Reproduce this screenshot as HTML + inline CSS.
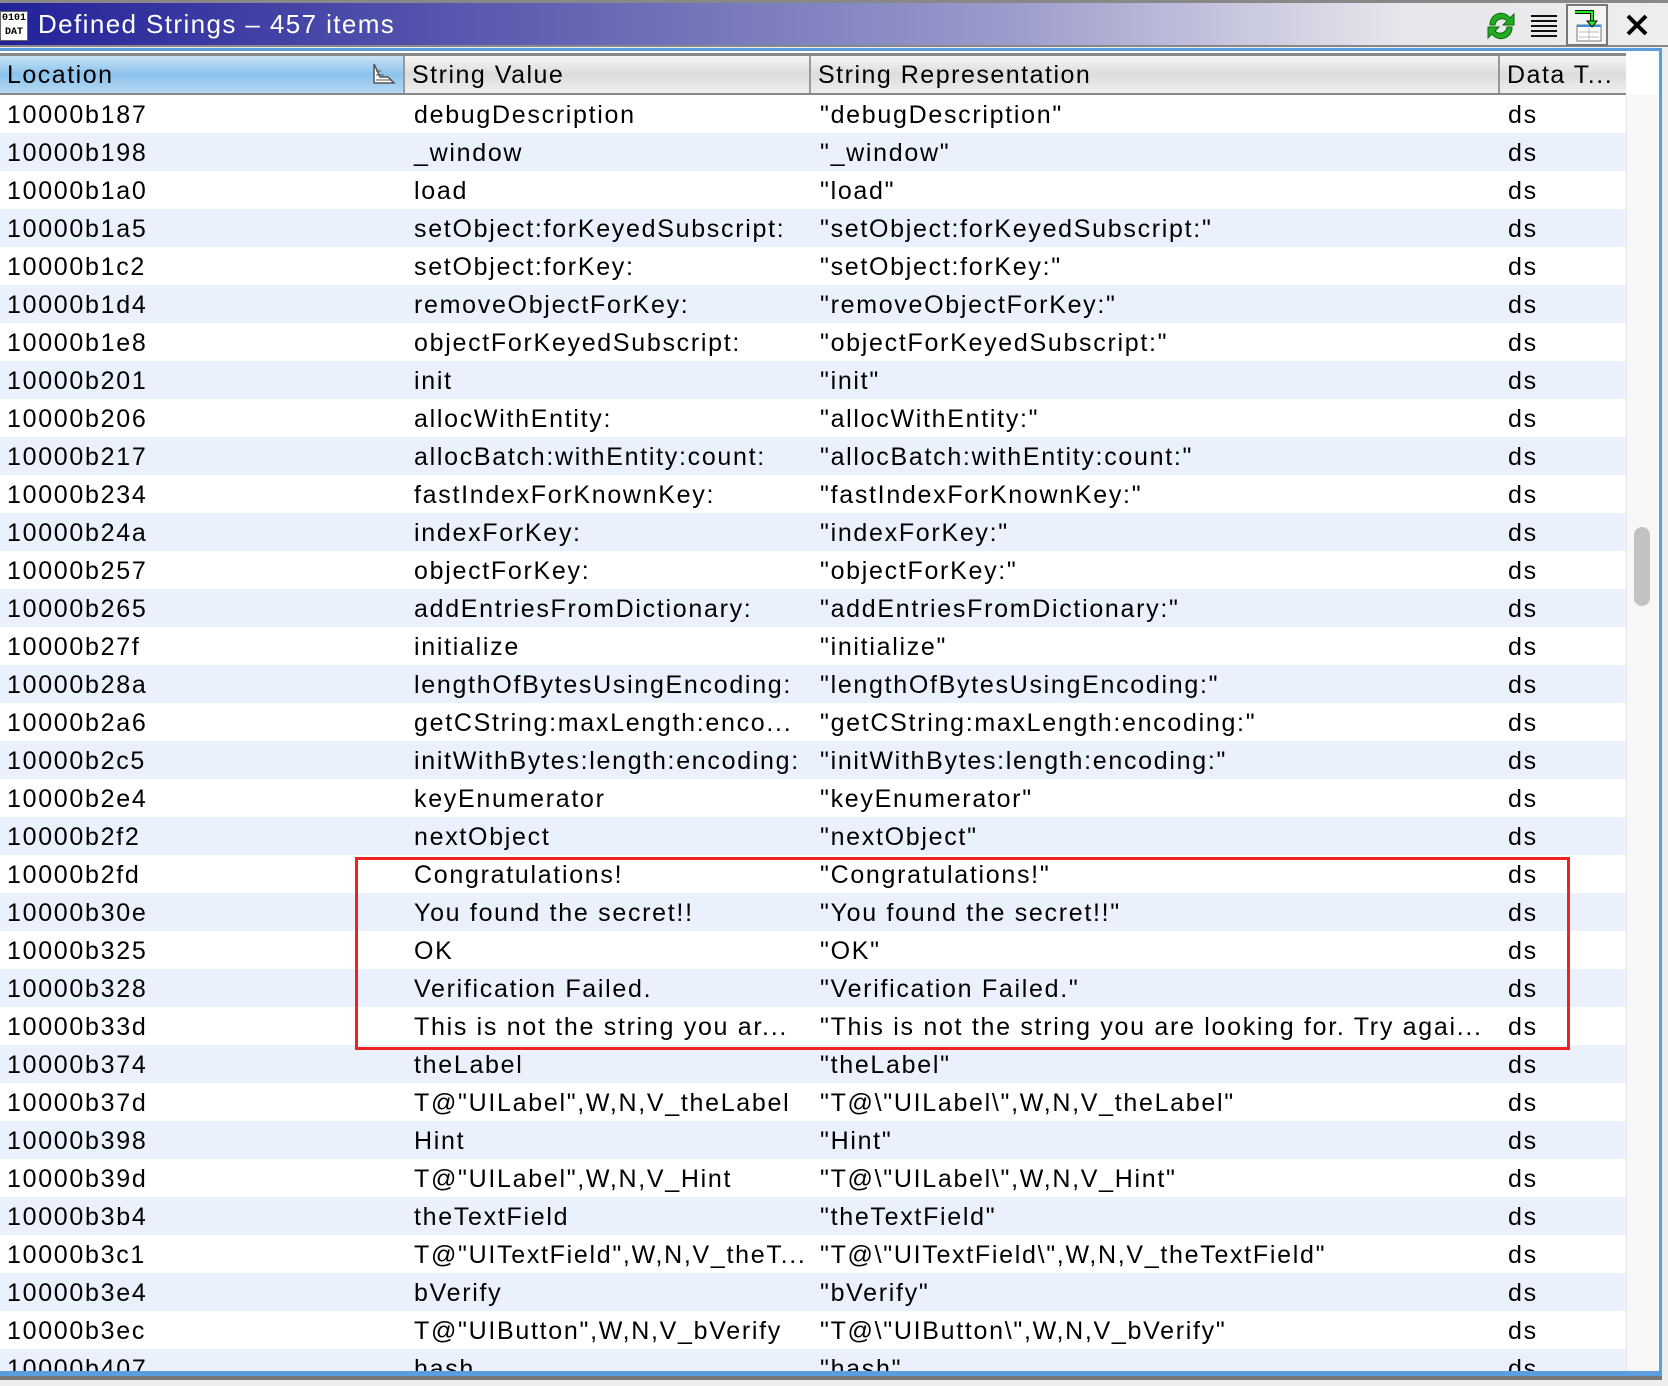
<!DOCTYPE html>
<html><head><meta charset="utf-8"><style>
*{margin:0;padding:0;box-sizing:border-box}
body{width:1668px;height:1386px;background:#eeeeee;position:relative;overflow:hidden;font-family:"Liberation Sans","DejaVu Sans",sans-serif;color:#000}
.title{position:absolute;left:0;top:0;width:1668px;height:47px;border-top:3px solid #888;background:linear-gradient(90deg,#22229a 0%,#5c5cb0 30%,#9a9acb 60%,#e6e6ec 84%,#eeeeee 100%);border-bottom:2px solid #888}
.title .t{position:absolute;left:38px;top:6px;font-size:26px;color:#fff;letter-spacing:1.4px}
.ico{position:absolute;left:0;top:8px;width:28px;height:30px;background:#fff;font:bold 10px "Liberation Mono",monospace;line-height:14px;color:#000;text-align:center;border:1px solid #666}
.blue{position:absolute;left:0;top:48px;width:1662px;height:3px;background:#5a9ee0}
.frame{position:absolute;left:0;top:51px;width:1662px;height:1326px;border-right:3px solid #5a9ee0;background:#fff}
.hdr{position:absolute;left:0;top:53px;height:42px;width:1626px;border-top:3px solid #888;border-bottom:2px solid #888;background:linear-gradient(#f6f6f6,#dcdcdc 50%,#eeeeee)}
.hc{position:absolute;top:0;height:37px;font-size:25px;line-height:38px;padding-left:7px;border-right:2px solid #999;letter-spacing:1.5px}
.row{position:absolute;left:0;width:1626px;height:38px;font-size:25px;line-height:40px;letter-spacing:1.7px}
.row.o{background:#eaf0fc}
.row span{position:absolute;top:0;white-space:nowrap}
.c1{left:7px}.c2{left:414px}.c3{left:820px}.c4{left:1508px}
.track{position:absolute;left:1626px;top:95px;width:32px;height:1276px;background:#f7f7f7;border-left:1px solid #e6e6e6}
.thumb{position:absolute;left:1634px;top:527px;width:16px;height:79px;border-radius:8px;background:#c2c2c2}
.red{position:absolute;left:355px;top:857px;width:1215px;height:193px;border:3px solid #ee2222}
.bot1{position:absolute;left:0;top:1371px;width:1662px;height:5px;background:#5a9ee0}
.bot2{position:absolute;left:0;top:1376px;width:1662px;height:4px;background:#777}
</style></head><body>
<div class="title"><div class="ico">0101<br>DAT</div><div class="t">Defined Strings – 457 items</div>
<svg style="position:absolute;left:1484px;top:6px" width="34" height="34" viewBox="0 0 34 34"><path d="M6 16 A11 11 0 0 1 26 9 L30 5 L30 16 L19 16 L23 12 A7 7 0 0 0 11 16 Z" fill="#22aa22" stroke="#0a6a0a" stroke-width="1"/><path d="M28 18 A11 11 0 0 1 8 25 L4 29 L4 18 L15 18 L11 22 A7 7 0 0 0 23 18 Z" fill="#22aa22" stroke="#0a6a0a" stroke-width="1"/></svg>
<svg style="position:absolute;left:1531px;top:11px" width="26" height="24"><g fill="#111"><rect y="1" width="26" height="2"/><rect y="6" width="26" height="2"/><rect y="11" width="26" height="2"/><rect y="16" width="26" height="2"/><rect y="21" width="26" height="2"/></g></svg>
<div style="position:absolute;left:1566px;top:1px;width:42px;height:42px;border:2px solid #777;background:#f4f4f4"></div>
<svg style="position:absolute;left:1572px;top:6px" width="32" height="34"><rect x="5" y="16" width="24" height="16" fill="#fff" stroke="#777"/><line x1="5" y1="17" x2="29" y2="17" stroke="#3a8ee0" stroke-width="2"/><g stroke="#bbb"><line x1="7" y1="23" x2="27" y2="23"/><line x1="7" y1="28" x2="27" y2="28"/><line x1="17" y1="19" x2="17" y2="31"/></g><path d="M3 3 H20 V14" fill="none" stroke="#111" stroke-width="4"/><path d="M3 3 H20 V14" fill="none" stroke="#22ee22" stroke-width="2"/><path d="M15 12 L20 18 L25 12 Z" fill="#22ee22" stroke="#111"/></svg>
<svg style="position:absolute;left:1625px;top:10px" width="24" height="24"><path d="M3 3 L21 21 M21 3 L3 21" stroke="#000" stroke-width="4"/></svg>
</div>
<div class="blue"></div>
<div class="frame"></div>
<div class="hdr">
<div class="hc" style="left:0;width:405px;background:linear-gradient(#c8e2f6,#8cc2ec 50%,#b6d8f3)">Location
<svg style="position:absolute;left:372px;top:6px" width="24" height="24"><path d="M2 2 V21 H22 L16 15 H8 L3 4 Z" fill="#fff" stroke="#555" stroke-width="1.5"/><g stroke="#555"><line x1="4" y1="9" x2="9" y2="9"/><line x1="4" y1="13" x2="12" y2="13"/><line x1="4" y1="18" x2="20" y2="18"/></g></svg></div>
<div class="hc" style="left:405px;width:406px">String Value</div>
<div class="hc" style="left:811px;width:689px">String Representation</div>
<div class="hc" style="left:1500px;width:126px;border-right:none">Data T...</div>
</div>
<div class="track"></div><div class="thumb"></div>
<div class="row" style="top:95px"><span class="c1">10000b187</span><span class="c2">debugDescription</span><span class="c3">"debugDescription"</span><span class="c4">ds</span></div>
<div class="row o" style="top:133px"><span class="c1">10000b198</span><span class="c2">_window</span><span class="c3">"_window"</span><span class="c4">ds</span></div>
<div class="row" style="top:171px"><span class="c1">10000b1a0</span><span class="c2">load</span><span class="c3">"load"</span><span class="c4">ds</span></div>
<div class="row o" style="top:209px"><span class="c1">10000b1a5</span><span class="c2">setObject:forKeyedSubscript:</span><span class="c3">"setObject:forKeyedSubscript:"</span><span class="c4">ds</span></div>
<div class="row" style="top:247px"><span class="c1">10000b1c2</span><span class="c2">setObject:forKey:</span><span class="c3">"setObject:forKey:"</span><span class="c4">ds</span></div>
<div class="row o" style="top:285px"><span class="c1">10000b1d4</span><span class="c2">removeObjectForKey:</span><span class="c3">"removeObjectForKey:"</span><span class="c4">ds</span></div>
<div class="row" style="top:323px"><span class="c1">10000b1e8</span><span class="c2">objectForKeyedSubscript:</span><span class="c3">"objectForKeyedSubscript:"</span><span class="c4">ds</span></div>
<div class="row o" style="top:361px"><span class="c1">10000b201</span><span class="c2">init</span><span class="c3">"init"</span><span class="c4">ds</span></div>
<div class="row" style="top:399px"><span class="c1">10000b206</span><span class="c2">allocWithEntity:</span><span class="c3">"allocWithEntity:"</span><span class="c4">ds</span></div>
<div class="row o" style="top:437px"><span class="c1">10000b217</span><span class="c2">allocBatch:withEntity:count:</span><span class="c3">"allocBatch:withEntity:count:"</span><span class="c4">ds</span></div>
<div class="row" style="top:475px"><span class="c1">10000b234</span><span class="c2">fastIndexForKnownKey:</span><span class="c3">"fastIndexForKnownKey:"</span><span class="c4">ds</span></div>
<div class="row o" style="top:513px"><span class="c1">10000b24a</span><span class="c2">indexForKey:</span><span class="c3">"indexForKey:"</span><span class="c4">ds</span></div>
<div class="row" style="top:551px"><span class="c1">10000b257</span><span class="c2">objectForKey:</span><span class="c3">"objectForKey:"</span><span class="c4">ds</span></div>
<div class="row o" style="top:589px"><span class="c1">10000b265</span><span class="c2">addEntriesFromDictionary:</span><span class="c3">"addEntriesFromDictionary:"</span><span class="c4">ds</span></div>
<div class="row" style="top:627px"><span class="c1">10000b27f</span><span class="c2">initialize</span><span class="c3">"initialize"</span><span class="c4">ds</span></div>
<div class="row o" style="top:665px"><span class="c1">10000b28a</span><span class="c2">lengthOfBytesUsingEncoding:</span><span class="c3">"lengthOfBytesUsingEncoding:"</span><span class="c4">ds</span></div>
<div class="row" style="top:703px"><span class="c1">10000b2a6</span><span class="c2">getCString:maxLength:enco...</span><span class="c3">"getCString:maxLength:encoding:"</span><span class="c4">ds</span></div>
<div class="row o" style="top:741px"><span class="c1">10000b2c5</span><span class="c2">initWithBytes:length:encoding:</span><span class="c3">"initWithBytes:length:encoding:"</span><span class="c4">ds</span></div>
<div class="row" style="top:779px"><span class="c1">10000b2e4</span><span class="c2">keyEnumerator</span><span class="c3">"keyEnumerator"</span><span class="c4">ds</span></div>
<div class="row o" style="top:817px"><span class="c1">10000b2f2</span><span class="c2">nextObject</span><span class="c3">"nextObject"</span><span class="c4">ds</span></div>
<div class="row" style="top:855px"><span class="c1">10000b2fd</span><span class="c2">Congratulations!</span><span class="c3">"Congratulations!"</span><span class="c4">ds</span></div>
<div class="row o" style="top:893px"><span class="c1">10000b30e</span><span class="c2">You found the secret!!</span><span class="c3">"You found the secret!!"</span><span class="c4">ds</span></div>
<div class="row" style="top:931px"><span class="c1">10000b325</span><span class="c2">OK</span><span class="c3">"OK"</span><span class="c4">ds</span></div>
<div class="row o" style="top:969px"><span class="c1">10000b328</span><span class="c2">Verification Failed.</span><span class="c3">"Verification Failed."</span><span class="c4">ds</span></div>
<div class="row" style="top:1007px"><span class="c1">10000b33d</span><span class="c2">This is not the string you ar...</span><span class="c3">"This is not the string you are looking for. Try agai...</span><span class="c4">ds</span></div>
<div class="row o" style="top:1045px"><span class="c1">10000b374</span><span class="c2">theLabel</span><span class="c3">"theLabel"</span><span class="c4">ds</span></div>
<div class="row" style="top:1083px"><span class="c1">10000b37d</span><span class="c2">T@"UILabel",W,N,V_theLabel</span><span class="c3">"T@\"UILabel\",W,N,V_theLabel"</span><span class="c4">ds</span></div>
<div class="row o" style="top:1121px"><span class="c1">10000b398</span><span class="c2">Hint</span><span class="c3">"Hint"</span><span class="c4">ds</span></div>
<div class="row" style="top:1159px"><span class="c1">10000b39d</span><span class="c2">T@"UILabel",W,N,V_Hint</span><span class="c3">"T@\"UILabel\",W,N,V_Hint"</span><span class="c4">ds</span></div>
<div class="row o" style="top:1197px"><span class="c1">10000b3b4</span><span class="c2">theTextField</span><span class="c3">"theTextField"</span><span class="c4">ds</span></div>
<div class="row" style="top:1235px"><span class="c1">10000b3c1</span><span class="c2">T@"UITextField",W,N,V_theT...</span><span class="c3">"T@\"UITextField\",W,N,V_theTextField"</span><span class="c4">ds</span></div>
<div class="row o" style="top:1273px"><span class="c1">10000b3e4</span><span class="c2">bVerify</span><span class="c3">"bVerify"</span><span class="c4">ds</span></div>
<div class="row" style="top:1311px"><span class="c1">10000b3ec</span><span class="c2">T@"UIButton",W,N,V_bVerify</span><span class="c3">"T@\"UIButton\",W,N,V_bVerify"</span><span class="c4">ds</span></div>
<div class="row o" style="top:1349px;height:22px;overflow:hidden"><span class="c1">10000b407</span><span class="c2">hash</span><span class="c3">"hash"</span><span class="c4">ds</span></div>
<div class="red"></div>
<div class="bot1"></div><div class="bot2"></div>
</body></html>
